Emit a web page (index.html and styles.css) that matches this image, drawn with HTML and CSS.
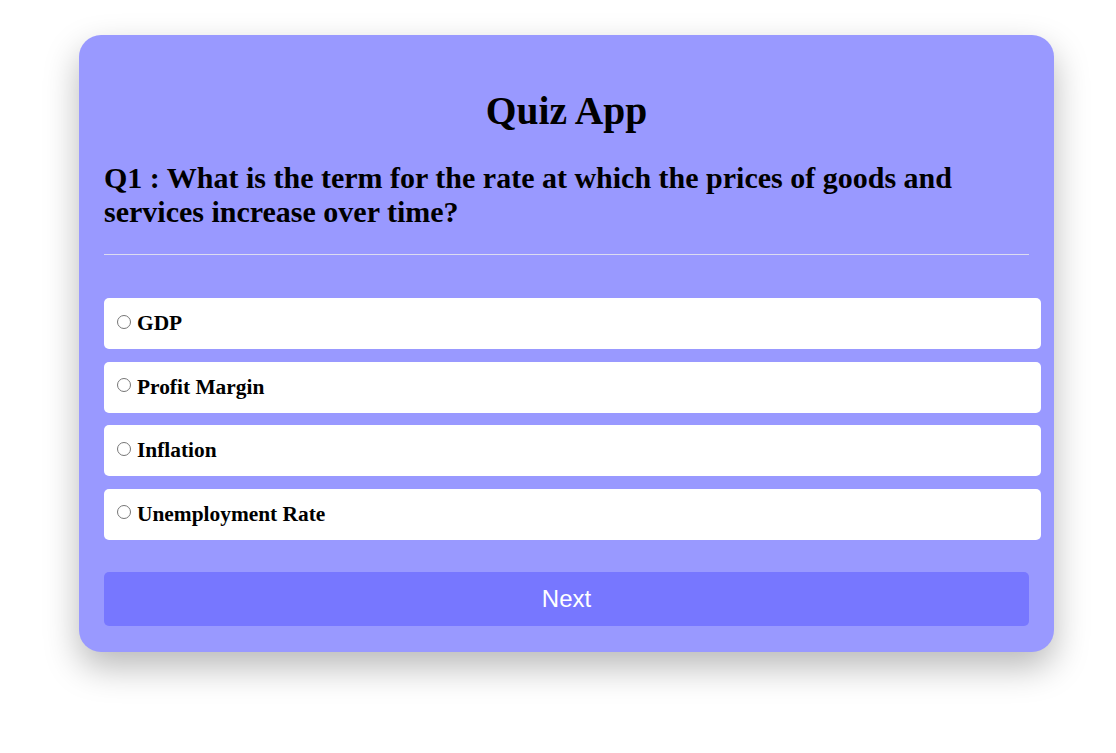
FILE: index.html
```html
<!DOCTYPE html>
<html>
<head>
<meta charset="utf-8">
<link rel="stylesheet" href="styles.css">
</head>
<body>
<div class="card">
  <h1 class="title">Quiz App</h1>
  <h2 class="question">Q1 : What is the term for the rate at which the prices of goods and services increase over time?</h2>
  <hr class="divider">
  <ul class="options">
    <li class="option"><label><input type="radio" name="ans"><span>GDP</span></label></li>
    <li class="option"><label><input type="radio" name="ans"><span>Profit Margin</span></label></li>
    <li class="option"><label><input type="radio" name="ans"><span>Inflation</span></label></li>
    <li class="option"><label><input type="radio" name="ans"><span>Unemployment Rate</span></label></li>
  </ul>
  <button class="next">Next</button>
</div>
</body>
</html>
```
FILE: styles.css
```css
* { box-sizing: border-box; }
html, body { margin: 0; padding: 0; background: #fff; }
body {
  font-family: "Liberation Serif", "Times New Roman", serif;
  color: #000;
  min-height: 100vh;
  padding-top: 35px;
  overflow: hidden;
}
.card {
  width: 975px;
  margin: 0 0 0 79px;
  background: #9999ff;
  border-radius: 22px;
  padding: 25px 25px 26px 25px;
  box-shadow: 0 15px 35px rgba(0,0,0,0.28);
}
.title {
  margin: 28px 0 0;
  text-align: center;
  font-size: 39.5px;
  line-height: 46px;
  font-weight: bold;
}
.question {
  margin: 27px 0 0;
  font-size: 30px;
  line-height: 34px;
  font-weight: bold;
}
.divider {
  margin: 25px 0 0;
  border: 0;
  border-top: 1px solid #dcdcf0;
  height: 0;
}
.options { list-style: none; margin: 43px 0 0; padding: 0; width: 937px; }
.option {
  background: #fff;
  border-radius: 5px;
  height: 51px;
  margin-bottom: 12.5px;
  display: flex;
  align-items: center;
  padding-left: 8px;
}
.option label { display: flex; align-items: center; font-size: 21.4px; font-weight: bold; }
.option input { margin: 0 6px 4px 5px; width: 14px; height: 14px; }
.next {
  display: block;
  width: 100%;
  height: 54px;
  margin-top: 32px;
  border: 0;
  border-radius: 5px;
  background: #7777ff;
  color: #fff;
  font-family: "Liberation Sans", Arial, sans-serif;
  font-size: 24px;
}
```
